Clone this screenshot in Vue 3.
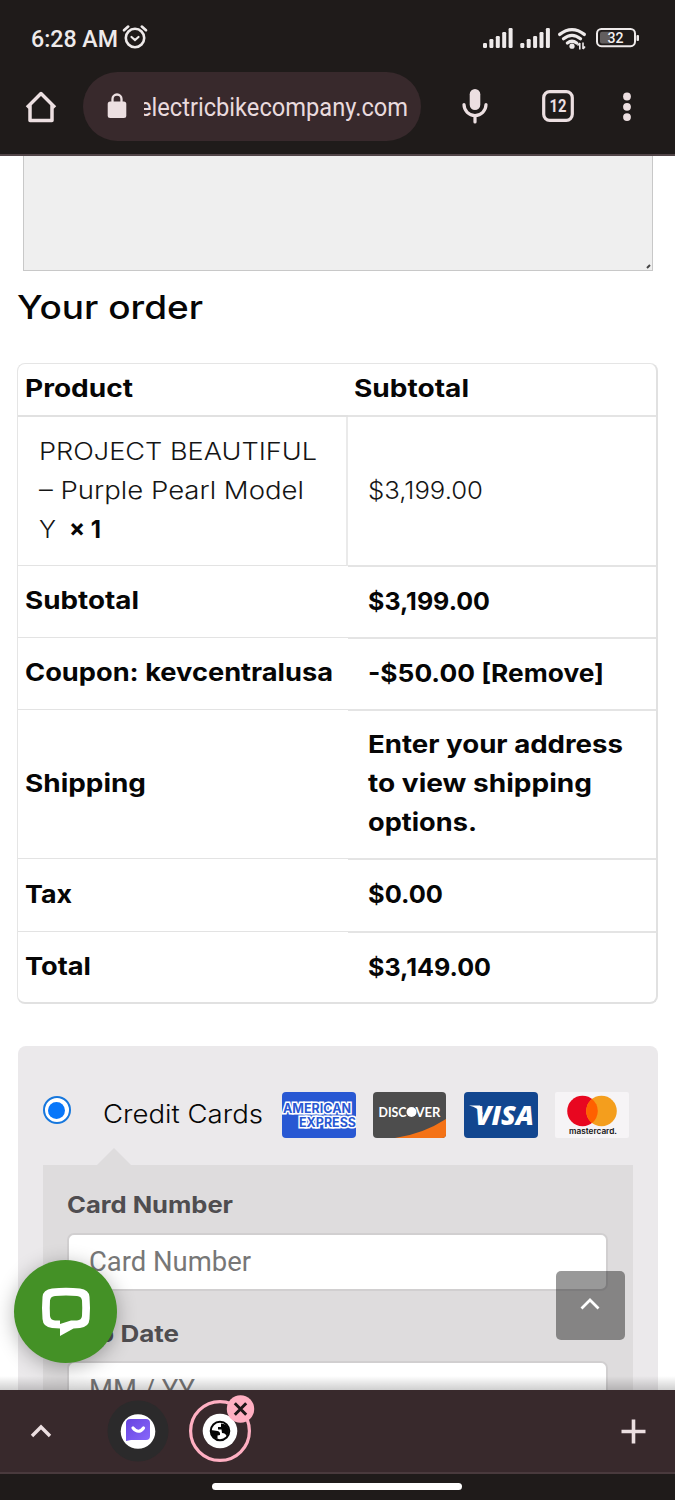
<script setup>
import { h } from 'vue'

// Text run set to a fixed advance width, centred on its line box.
const Fit = (p) =>
  h('svg', { class: 'fit', width: p.w, height: p.lh || 39, role: 'text' }, [
    h('text', {
      x: 0,
      y: Math.round(((p.lh || 39) / 2 + (p.size || 24.5) * 0.363 - 1) * 10) / 10,
      textLength: p.w,
      lengthAdjust: 'spacingAndGlyphs',
      'font-size': p.size || 24.5,
      'font-weight': p.weight || 700,
      fill: p.color || '#060606',
      'font-family': p.family || 'Inter, "Liberation Sans", sans-serif'
    }, p.t)
  ])
Fit.props = ['t', 'w', 'lh', 'size', 'weight', 'color', 'family']

const totals = [
  { label: 'Subtotal', lw: 114, lines: [['$3,199.00', 122]], height: 72 },
  { label: 'Coupon: kevcentralusa', lw: 308, lines: [['-$50.00 [Remove]', 236]], height: 72 },
  { label: 'Shipping', lw: 121, lines: [['Enter your address', 255], ['to view shipping', 224], ['options.', 109]], height: 149 },
  { label: 'Tax', lw: 47, lines: [['$0.00', 75]], height: 73 },
  { label: 'Total', lw: 66, lines: [['$3,149.00', 123]], height: 72 }
]
const bars = [6, 9, 12, 16, 20]
</script>

<template>
  <div class="phone">
    <header>
      <div class="status">
        <Fit t="6:28 AM" :w="87" :lh="30" :size="24" :weight="500" color="#eeeaea" family="Roboto, sans-serif" />
        <svg class="alarm" width="26" height="26" viewBox="0 0 26 26" fill="none" stroke="#eeeaea" stroke-linecap="round">
          <circle cx="13" cy="14" r="9.2" stroke-width="2.6" />
          <path d="M9.5 13l3.5 3 3.5-3" stroke-width="2.2" />
          <path d="M2 6.2l4.2-3.6M24 6.2l-4.2-3.6" stroke-width="2.7" />
        </svg>
        <svg class="signals" width="158" height="26" viewBox="0 0 158 26">
          <g v-for="s in 2" :key="s" fill="#eeeaea">
            <rect v-for="(b, i) in bars" :key="i" :x="(s - 1) * 37.3 + 1 + i * 6.4" :y="23 - b + (i === 0 ? 1 : 0)" width="4" :height="i === 0 ? 5 : b" rx="1.2" />
          </g>
          <g fill="none" stroke="#eeeaea" stroke-width="3.3" stroke-linecap="round">
            <path d="M77.7 9.4Q90 -.2 102.3 9.4" />
            <path d="M81.5 13.8Q90 7 98.5 13.8" />
            <path d="M85.4 18Q90 14.6 94.6 18" />
          </g>
          <circle cx="90" cy="21.2" r="2.6" fill="#eeeaea" />
          <path d="M97.800 18v6.500M95.500 20.500l2.300-2.500M101 17.500V24M101 24l2-2.500" stroke="#eeeaea" stroke-width="1.600" fill="none" />
          <rect x="115" y="4" width="38" height="17.200" rx="4.400" fill="none" stroke="#eeeaea" stroke-width="2" />
          <path d="M120 6.800h8v11.600h-8a2 2 0 0 1-2-2V8.800a2 2 0 0 1 2-2z" fill="#625e5e" />
          <rect x="154.500" y="10" width="2.500" height="6" rx="1" fill="#eeeaea" />
          <text x="125.500" y="17.500" textLength="16" lengthAdjust="spacingAndGlyphs" font-family="Roboto, sans-serif" font-size="14" font-weight="500" fill="#f4f0f0">32</text>
        </svg>
      </div>
      <div class="toolbar">
        <svg class="home" width="34" height="34" viewBox="0 0 34 34" fill="none" stroke="#ecdfe1" stroke-width="3.500" stroke-linejoin="round">
          <path d="M3 17.500L17 3.500l14 14M6 15v15.500h22V15" />
        </svg>
        <div class="pill">
          <svg class="lock" width="20" height="26" viewBox="0 0 20 26">
            <rect x=".7" y="8.500" width="18.600" height="16.500" rx="2.500" fill="#ecdfe1" />
            <path d="M5.500 10V6a4.500 4.500 0 0 1 9 0v4" fill="none" stroke="#ecdfe1" stroke-width="2.300" />
          </svg>
          <div class="url"><Fit t="electricbikecompany.com" :w="269" :lh="36" :size="25" :weight="400" color="#e9dadd" family="Roboto, sans-serif" /></div>
        </div>
        <svg class="mic" width="28" height="36" viewBox="0 0 28 36">
          <rect x="8.700" y="1" width="10.600" height="21" rx="5.300" fill="#ecdfe1" />
          <path d="M3 16.500a11 11 0 0 0 22 0M14 27.500V34" fill="none" stroke="#ecdfe1" stroke-width="3.200" stroke-linecap="round" />
        </svg>
        <svg class="tabs" width="32" height="32" viewBox="0 0 32 32">
          <rect x="1.700" y="1.700" width="28.600" height="28.600" rx="6" fill="none" stroke="#ecdfe1" stroke-width="3.200" />
          <text x="7.500" y="22" textLength="17" lengthAdjust="spacingAndGlyphs" font-family="Roboto, sans-serif" font-size="17.500" font-weight="700" fill="#ecdfe1">12</text>
        </svg>
        <svg class="more" width="10" height="30" viewBox="0 0 10 30" fill="#ecdfe1">
          <circle cx="5" cy="4.500" r="3.900" /><circle cx="5" cy="14.800" r="3.900" /><circle cx="5" cy="25.100" r="3.900" />
        </svg>
      </div>
    </header>

    <main>
      <div class="notes">
        <svg width="5" height="5" viewBox="0 0 5 5"><path d="M1 4l3-3" stroke="#444" stroke-width="2" /></svg>
      </div>
      <h2><Fit t="Your order" :w="186" :lh="50" :size="33" :weight="550" /></h2>

      <section class="order">
        <div class="row head">
          <div><Fit t="Product" :w="108" /></div>
          <div><Fit t="Subtotal" :w="115" /></div>
        </div>
        <div class="row item">
          <div class="name">
            <Fit t="PROJECT BEAUTIFUL" :w="278" :weight="300" color="#151515" />
            <Fit t="– Purple Pearl Model" :w="265" :weight="300" color="#151515" />
            <span class="qty">
              <Fit t="Y" :w="17" :weight="300" color="#151515" />
              <Fit t="× 1" :w="32" />
            </span>
          </div>
          <div class="value"><Fit t="$3,199.00" :w="115" :weight="300" color="#151515" /></div>
        </div>
        <div v-for="r in totals" :key="r.label" class="row" :style="{ height: r.height + 'px' }">
          <div class="label"><Fit :t="r.label" :w="r.lw" /></div>
          <div class="value"><Fit v-for="l in r.lines" :key="l[0]" :t="l[0]" :w="l[1]" /></div>
        </div>
      </section>

      <section class="payment">
        <div class="method">
          <span class="radio"><i></i></span>
          <Fit class="method-name" t="Credit Cards" :w="160" :size="25" :weight="300" />
          <div class="cards">
            <svg width="74" height="46" viewBox="0 0 74 46">
              <defs><clipPath id="amex"><rect width="74" height="46" rx="4" /></clipPath></defs>
              <g clip-path="url(#amex)">
                <rect width="74" height="46" fill="#2858d3" />
                <g font-family="Inter, sans-serif" font-size="12.500" font-weight="700" fill="#2858d3" stroke="#fff" stroke-width="3" paint-order="stroke" stroke-linejoin="miter">
                  <text x="1" y="20.500" textLength="68" lengthAdjust="spacingAndGlyphs">AMERICAN</text>
                  <text x="17" y="35" textLength="57" lengthAdjust="spacingAndGlyphs">EXPRESS</text>
                </g>
              </g>
            </svg>
            <svg width="73" height="46" viewBox="0 0 73 46">
              <defs><clipPath id="disc"><rect width="73" height="46" rx="4" /></clipPath></defs>
              <g clip-path="url(#disc)">
                <rect width="73" height="46" fill="#4d4d4d" />
                <path d="M22 46Q50 42 73 27V46z" fill="#f47216" />
              </g>
              <g font-family="Lato, sans-serif" font-size="14" font-weight="700" fill="#fff">
                <text x="5.500" y="25" textLength="28" lengthAdjust="spacingAndGlyphs">DISC</text>
                <text x="42.500" y="25" textLength="25" lengthAdjust="spacingAndGlyphs">VER</text>
              </g>
              <circle cx="38.500" cy="20" r="5" fill="#fff" />
            </svg>
            <svg width="74" height="46" viewBox="0 0 74 46">
              <rect width="74" height="46" rx="4" fill="#12468f" />
              <text x="11" y="32.500" textLength="59" lengthAdjust="spacingAndGlyphs" font-family="'Open Sans', sans-serif" font-size="27" font-weight="800" font-style="italic" fill="#fff">VISA</text>
              <path d="M5 13.500h11l3 9q-5-7-14-9z" fill="#fff" />
            </svg>
            <svg width="74" height="46" viewBox="0 0 74 46">
              <rect width="74" height="46" rx="2" fill="#f6f4f6" />
              <circle cx="27.500" cy="19" r="15.300" fill="#e80720" />
              <circle cx="46.500" cy="19" r="15.300" fill="#f49e1d" />
              <path d="M37 7a15.300 15.300 0 0 1 0 24a15.300 15.300 0 0 1 0-24z" fill="#ff6000" />
              <text x="14" y="42.200" textLength="48" lengthAdjust="spacingAndGlyphs" font-family="Inter, sans-serif" font-size="7.500" font-weight="600" fill="#111">mastercard.</text>
            </svg>
          </div>
        </div>
        <div class="form">
          <Fit t="Card Number" :w="166" :lh="32" :size="22.800" color="#4f4d50" />
          <div class="input"><Fit t="Card Number" :w="162" :lh="36" :size="27" :weight="400" color="#777" family="Roboto, sans-serif" /></div>
          <Fit class="second" t="Exp Date" :w="112" :lh="32" :size="22.800" color="#4f4d50" />
          <div class="input"><Fit t="MM / YY" :w="106" :lh="36" :size="27" :weight="400" color="#777" family="Roboto, sans-serif" /></div>
        </div>
      </section>

      <div class="chat">
        <svg width="50" height="50" viewBox="0 0 50 50">
          <path fill-rule="evenodd" fill="#fff" d="M11 1.500Q25 .2 39 1.500Q48 2.500 48.500 10Q49.500 21 48.500 32Q48 40 39 41L32.500 41.500L19 49V41.500L11 41Q2 40 1.500 32Q.5 21 1.500 10Q2 2.500 11 1.500zM14 9Q9.500 9.300 9 13.500Q8.500 21 9 29Q9.500 33.200 14 33.500H19V37L30 33.500H36Q40.500 33.200 41 29Q41.500 21 41 13.500Q40.500 9.300 36 9Q25 8 14 9z" />
        </svg>
      </div>
      <div class="to-top">
        <svg width="20" height="14" viewBox="0 0 20 14" fill="none" stroke="#fff" stroke-width="2.800"><path d="M1.500 11.500L10 3l8.500 8.500" /></svg>
      </div>
      <div class="fade"></div>
    </main>

    <nav>
      <svg class="up" width="22" height="16" viewBox="0 0 22 16" fill="none" stroke="#ecdfe1" stroke-width="3.400"><path d="M2 13l9-9 9 9" /></svg>
      <svg class="site" width="62" height="62" viewBox="0 0 62 62">
        <defs><linearGradient id="violet" x1="0" y1="0" x2="1" y2="1"><stop offset="0" stop-color="#6743df" /><stop offset="1" stop-color="#8869fb" /></linearGradient></defs>
        <circle cx="31" cy="31" r="30.500" fill="#2b2a2b" />
        <circle cx="31" cy="31.500" r="17.300" fill="#fff" />
        <path d="M23.500 19H39q4 0 4 4v13q0 4-4 4H24l-5 1V23q0-4 4.500-4z" fill="url(#violet)" />
        <path d="M26 28q5.500 6.500 10.500 0" fill="none" stroke="#fff" stroke-width="3.200" stroke-linecap="round" />
      </svg>
      <svg class="active" width="68" height="68" viewBox="0 0 68 68">
        <circle cx="32" cy="35" r="29.400" fill="none" stroke="#ffafc2" stroke-width="3.200" />
        <circle cx="32" cy="35" r="17.300" fill="#fff" />
        <circle cx="32" cy="35" r="9.300" fill="#fff" stroke="#050505" stroke-width="2" />
        <path d="M22.800 34l6.700 1q3 .5 2.500 4l-2.500.5v3.500q-7-2-6.700-9z" fill="#050505" />
        <path d="M33 27.500q6 0 7.800 6 .5 4-2.300 6.500-1-3-4.500-3l-.5-3.500h-3.500v-2.500h3z" fill="#050505" />
        <circle cx="52.500" cy="13" r="13.700" fill="#ffafc2" />
        <path d="M46.800 7.300l11.400 11.400M58.200 7.300L46.800 18.700" stroke="#1f1719" stroke-width="3" />
      </svg>
      <svg class="plus" width="25" height="25" viewBox="0 0 25 25" stroke="#ecdfe1" stroke-width="3.600"><path d="M.5 12.500h24M12.500.5v24" /></svg>
    </nav>
    <footer><span></span></footer>
  </div>
</template>

<style>
body { margin: 0; background: #fff; }
</style>

<style scoped>
.phone { width: 675px; height: 1500px; display: flex; flex-direction: column; overflow: hidden; background: #fff; font-family: Inter, "Liberation Sans", sans-serif; }
svg, :deep(.fit) { display: block; flex: none; overflow: visible; }
header { height: 156px; flex: none; background: #1f1b1a; box-sizing: border-box; border-bottom: 2px solid #514548; }
.status { display: flex; align-items: center; height: 72px; padding: 5px 35px 0 31px; box-sizing: border-box; }
.alarm { margin-left: 4px; margin-top: -3px; }
.signals { margin-left: auto; margin-top: -1px; }
.toolbar { display: flex; align-items: center; height: 69px; padding-left: 24px; }
.pill { width: 338px; height: 69px; margin-left: 24.500px; border-radius: 35px; background: #38292c; display: flex; align-items: center; box-sizing: border-box; padding: 0 13px 0 24px; }
.lock { margin-top: -2px; }
.url { display: flex; justify-content: flex-end; width: 264px; margin-left: auto; overflow: hidden; padding-top: 2px; }
.mic { margin-left: 40.500px; margin-top: -1px; }
.tabs { margin-left: 52.500px; margin-top: -1px; }
.more { margin-left: 48px; }
main { position: relative; flex: 1; overflow: hidden; min-height: 0; }
.notes { height: 115px; box-sizing: border-box; margin: 0 22px 0 22.500px; background: #efefef; border: 1px solid #c8c8c8; border-top: 0; display: flex; justify-content: flex-end; align-items: flex-end; padding: 1px; }
h2 { margin: 12px 0 0 16.500px; height: 80px; }
.order { margin: 0 17px; border: 1px solid #e5e5e5; border-right: 2px solid #e1e1e1; border-bottom: 2px solid #e1e1e1; border-radius: 8px; height: 641px; box-sizing: border-box; }
.row { display: grid; grid-template-columns: 330px 1fr; box-sizing: border-box; }
.row > div { display: flex; flex-direction: column; justify-content: center; box-sizing: border-box; border-bottom: 2px solid #e4e4e4; }
.row > div:first-child { padding-left: 7px; border-bottom: 1px solid #e3e3e3; margin-bottom: 1px; }
.row:last-child > div, .row:last-child > div:first-child { border-bottom-color: transparent; }
.row > .label { padding-bottom: 1px; }
.row > .value { padding-left: 20px; }
.head { height: 53px; }
.head > div:first-child { border-bottom: 2px solid #e1e1e1; margin-bottom: 0; }
.head > div + div { padding-left: 6px; }
.item { height: 150px; }
.row > .name:first-child { padding-left: 21px; border-right: 2px solid #eaeaea; }
.qty { display: flex; gap: 13px; }
.payment { height: 400px; margin: 42px 17px 0 17.500px; padding: 0 25.500px; background: #ebe9eb; border-radius: 8px; box-sizing: border-box; }
.method { display: flex; height: 119px; align-items: center; }
.radio { width: 28px; height: 28px; box-sizing: border-box; border: 2px solid #1677dd; border-radius: 50%; background: #fff; display: flex; align-items: center; justify-content: center; margin: 9px 0 0 -.5px; }
.radio i { width: 17px; height: 17px; border-radius: 50%; background: #0877fa; }
.method-name { margin: 18px 0 0 32px; }
.cards { display: flex; margin: 19px 0 0 19px; gap: 17.500px; }
.form { position: relative; background: #dedcdd; height: 281px; padding: 25px 24.500px 25px 24px; box-sizing: border-box; }
.form::before { content: ""; position: absolute; left: 54px; top: -17px; border: solid transparent; border-width: 0 17.500px 17px; border-bottom-color: #dedcdd; }
.input { height: 58px; margin-top: 10.500px; box-sizing: border-box; border: 2px solid #d1cfd0; border-radius: 7px; background: #fff; padding: 9px 0 0 20px; }
.second { margin-top: 28px; }
.chat { position: absolute; left: 14px; top: 1104px; width: 103px; height: 103px; border-radius: 50%; background: #449126; display: flex; align-items: center; justify-content: center; box-shadow: 0 4px 20px rgba(0, 0, 0, .3); }
.to-top { position: absolute; left: 555.500px; top: 1114.500px; width: 69px; height: 69px; border-radius: 5px; background: rgba(0, 0, 0, .4); display: flex; align-items: center; justify-content: center; }
.to-top svg { margin-top: -3px; }
.fade { position: absolute; left: 0; right: 0; bottom: 0; height: 14px; background: linear-gradient(transparent, rgba(0, 0, 0, .19)); }
nav { height: 84px; flex: none; box-sizing: border-box; background: #38292c; border-bottom: 2px solid #493a3d; display: flex; align-items: center; padding: 0 29px 0 30px; }
.site { margin-left: 54.500px; }
.active { margin-left: 19.500px; margin-top: -2px; }
.plus { margin-left: auto; }
footer { height: 26px; flex: none; background: #1f1b1a; display: flex; justify-content: center; }
footer span { width: 250px; height: 6.500px; margin: 9px 1px 0 0; border-radius: 4px; background: #fff; }
</style>
